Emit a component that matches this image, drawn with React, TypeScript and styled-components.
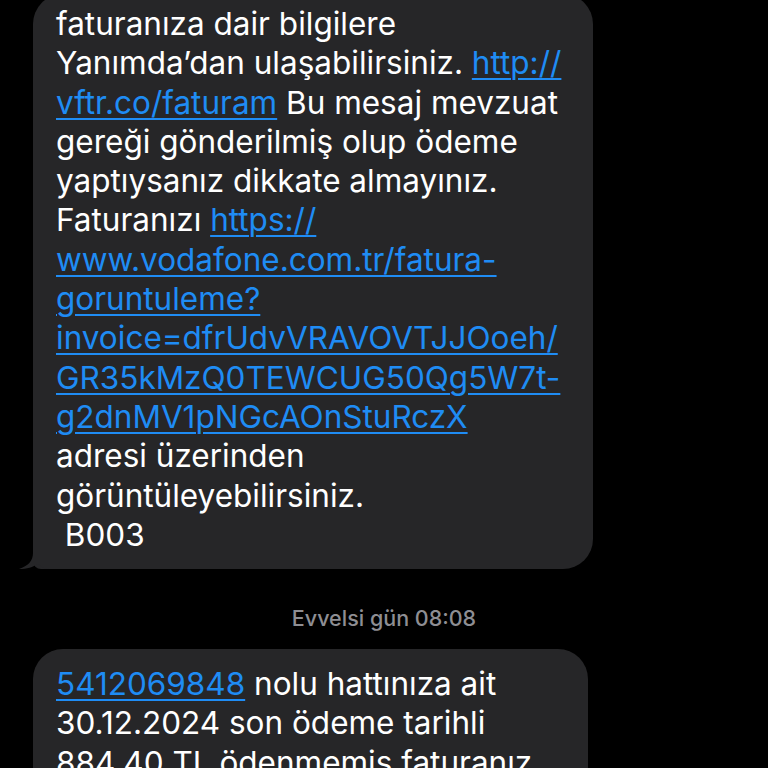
import React from 'react';
import styled, { createGlobalStyle } from 'styled-components';

const GlobalStyle = createGlobalStyle`
  html, body {
    margin: 0;
    padding: 0;
    background: #000;
  }
  body {
    font-family: Inter, "Noto Sans", "Liberation Sans", sans-serif;
    -webkit-font-smoothing: antialiased;
  }
`;

type Part = string | { link: string };

interface Message {
  id: number;
  width: number;
  lines: Part[][];
}

const first: Message = {
  id: 1,
  width: 560,
  lines: [
    ['faturanıza dair bilgilere'],
    ['Yanımda’dan ulaşabilirsiniz. ', { link: 'http://' }],
    [{ link: 'vftr.co/faturam' }, ' Bu mesaj mevzuat'],
    ['gereği gönderilmiş olup ödeme'],
    ['yaptıysanız dikkate almayınız.'],
    ['Faturanızı ', { link: 'https://' }],
    [{ link: 'www.vodafone.com.tr/fatura-' }],
    [{ link: 'goruntuleme?' }],
    [{ link: 'invoice=dfrUdvVRAVOVTJJOoeh/' }],
    [{ link: 'GR35kMzQ0TEWCUG50Qg5W7t-' }],
    [{ link: 'g2dnMV1pNGcAOnStuRczX' }],
    ['adresi üzerinden'],
    ['görüntüleyebilirsiniz.'],
    ['\u00a0B003'],
  ],
};

const second: Message = {
  id: 2,
  width: 555,
  lines: [
    [{ link: '5412069848' }, ' nolu hattınıza ait'],
    ['30.12.2024 son ödeme tarihli'],
    ['884,40 TL ödenmemiş faturanız'],
  ],
};

const renderLine = (parts: Part[], i: number) => (
  <Line key={i}>
    {parts.map((p, j) =>
      typeof p === 'string' ? <React.Fragment key={j}>{p}</React.Fragment> : <Link key={j}>{p.link}</Link>,
    )}
  </Line>
);

const Tail = () => (
  <TailSvg width="30" height="30" viewBox="0 0 30 30">
    <path d="M14 0 L14 14 C14 22 9 27 0 30 C8 30 14 28 19 25 C22 28 26 30 30 30 L30 0 Z" fill="#262628" />
  </TailSvg>
);

const App: React.FC = () => {
  return (
    <>
      <GlobalStyle />
      <Screen>
        <Thread>
          <Row>
            <Bubble $width={first.width} $top={10} $bottom={15} $tail>
              {first.lines.map(renderLine)}
              <Tail />
            </Bubble>
          </Row>
          <Stamp>Evvelsi gün 08:08</Stamp>
          <Row>
            <Bubble $width={second.width} $top={15} $bottom={15}>
              {second.lines.map(renderLine)}
            </Bubble>
          </Row>
        </Thread>
      </Screen>
    </>
  );
};

export default App;

const Screen = styled.div`
  width: 768px;
  height: 768px;
  overflow: hidden;
  background: #000;
`;

const Thread = styled.div`
  display: flex;
  flex-direction: column;
  margin-top: -6px;
`;

const Row = styled.div`
  display: flex;
  padding-left: 33px;
`;

const Bubble = styled.div<{ $width: number; $top: number; $bottom: number; $tail?: boolean }>`
  position: relative;
  box-sizing: border-box;
  width: ${({ $width }) => $width}px;
  padding: ${({ $top, $bottom }) => `${$top}px 20px ${$bottom}px 23px`};
  background: #262628;
  border-radius: 30px;
  border-bottom-left-radius: ${({ $tail }) => ($tail ? '8px' : '30px')};
  color: #fff;
  font-size: 31.5px;
  line-height: 39.3px;
`;

const TailSvg = styled.svg`
  position: absolute;
  left: -14px;
  bottom: 0;
  display: block;
`;

const Line = styled.div`
  white-space: nowrap;
`;

const Link = styled.span`
  color: #1f8cf4;
  text-decoration: underline;
  text-decoration-thickness: 2px;
  text-underline-offset: 4px;
`;

const Stamp = styled.div`
  margin: 37px 0 19px;
  text-align: center;
  color: #8e8e93;
  font-size: 21.5px;
  line-height: 24px;
  font-weight: 500;
`;
